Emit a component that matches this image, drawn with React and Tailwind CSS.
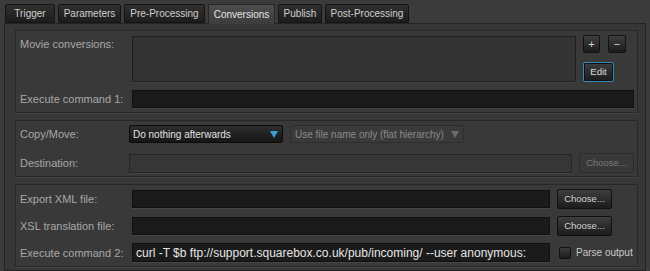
const tabs = [
  { label: 'Trigger', w: 'w-[50px]' },
  { label: 'Parameters', w: 'w-[63px]' },
  { label: 'Pre-Processing', w: 'w-[81px]' },
  { label: 'Conversions', w: 'w-[67px]', active: true },
  { label: 'Publish', w: 'w-[44px]' },
  { label: 'Post-Processing', w: 'w-[84px]' }
];

function Label({ children, w = 'w-[112px]', top }) {
  return (
    <div className={`${w} shrink-0 text-[11px] text-[#a8a8a8] leading-[14px] ${top ? 'pt-[1px] self-start' : ''}`}>
      {children}
    </div>
  );
}

function Field({ children, h = 'h-[18px]' }) {
  return (
    <div className={`flex-1 ${h} bg-[#1b1b1b] border border-[#101010] shadow-[0_1px_0_#474747] flex items-center px-[3px] text-[12px] text-[#e6e6e6] whitespace-nowrap overflow-hidden`}>
      {children}
    </div>
  );
}

function Button({ children, w, h = 'h-[20px]', disabled, focus }) {
  return (
    <div
      className={`${w} ${h} shrink-0 flex items-center justify-center rounded-[2px] text-[9.5px] ${
        disabled
          ? 'bg-[#393939] border border-[#2c2c2c] text-[#7a7a7a]'
          : focus
            ? 'bg-linear-to-b from-[#3e3e3e] to-[#1c1c1c] border border-[#3389b9] shadow-[inset_0_0_0_1px_#111] text-[#dcdcdc]'
            : 'bg-linear-to-b from-[#3e3e3e] to-[#1c1c1c] border border-[#111] text-[#d2d2d2]'
      }`}
    >
      {children}
    </div>
  );
}

function Triangle({ color }) {
  return (
    <svg width="8" height="7" viewBox="0 0 8 7">
      <polygon points="0,0 8,0 4,7" fill={color} />
    </svg>
  );
}

export default function App() {
  return (
    <div className="w-[650px] h-[271px] bg-[#3b3b3b] pt-[4px] px-[4px] overflow-hidden font-['Liberation_Sans',Arial,sans-serif]">
      <div className="relative z-10 flex items-start gap-[3px] pl-[1px] h-[19px]">
        {tabs.map((t) => (
          <div
            key={t.label}
            className={`${t.w} flex items-center justify-center text-[10px] rounded-t-[2px] ${
              t.active
                ? 'h-[20px] bg-linear-to-b from-[#4d4d4d] to-[#3c3c3c] border border-b-0 border-[#262626] text-[#e4e4e4]'
                : 'h-[19px] bg-linear-to-b from-[#303030] to-[#1d1d1d] border border-[#141414] text-[#cfcfcf]'
            }`}
          >
            {t.label}
          </div>
        ))}
      </div>

      <div className="h-[248px] border border-[#242424] bg-[#373737] pl-[10px] pr-[7px] pt-[6px] flex flex-col gap-[7px]">
        {/* movie conversions */}
        <div className="h-[83px] border border-[#272727] bg-[#393939] shadow-[0_1px_0_#444] pl-[4px] pr-[3px] pt-[5px] flex flex-col gap-[8px]">
          <div className="flex h-[46px] gap-[7px]">
            <Label top w="w-[105px]">Movie conversions:</Label>
            <div className="flex-1 h-[46px] bg-[#333] border border-[#1f1f1f] shadow-[0_1px_0_#444]" />
            <div className="w-[51px] shrink-0 flex flex-col gap-[9px] -mt-[1px]">
              <div className="flex gap-[8px]">
                <Button w="w-[17px]" h="h-[18px]">
                  <span className="text-[11px] leading-none">+</span>
                </Button>
                <Button w="w-[18px]" h="h-[18px]">
                  <span className="text-[11px] leading-none">−</span>
                </Button>
              </div>
              <Button w="w-[31px]" focus>Edit</Button>
            </div>
          </div>
          <div className="flex items-center">
            <Label>Execute command 1:</Label>
            <Field />
          </div>
        </div>

        {/* copy / move */}
        <div className="h-[57px] border border-[#272727] bg-[#393939] shadow-[0_1px_0_#444] pl-[4px] pr-[3px] pt-[4px] flex flex-col gap-[10px]">
          <div className="flex items-center h-[18px]">
            <Label w="w-[109px]">Copy/Move:</Label>
            <div className="w-[154px] h-[18px] rounded-[2px] bg-linear-to-b from-[#2e2e2e] to-[#151515] border border-[#0b0b0b] flex items-center justify-between pl-[3px] pr-[4px] text-[10px] text-[#e2e2e2]">
              Do nothing afterwards
              <Triangle color="#3c9ed6" />
            </div>
            <div className="ml-[7px] w-[174px] h-[18px] rounded-[2px] bg-[#3a3a3a] border border-[#2d2d2d] flex items-center justify-between pl-[4px] pr-[4px] text-[10px] text-[#8a8a8a]">
              Use file name only (flat hierarchy)
              <Triangle color="#6b6b6b" />
            </div>
          </div>
          <div className="flex items-center gap-[7px]">
            <Label w="w-[102px]">Destination:</Label>
            <div className="flex-1 h-[19px] bg-[#363636] border border-[#262626] shadow-[0_1px_0_#444]" />
            <Button w="w-[55px]" disabled>Choose...</Button>
          </div>
        </div>

        {/* xml export */}
        <div className="h-[83px] border border-[#272727] bg-[#393939] shadow-[0_1px_0_#444] pl-[4px] pr-[3px] pt-[5px] flex flex-col">
          <div className="flex items-center gap-[7px] h-[18px]">
            <Label w="w-[105px]">Export XML file:</Label>
            <Field />
            <div className="w-[77px] shrink-0">
              <Button w="w-[55px]">Choose...</Button>
            </div>
          </div>
          <div className="flex items-center gap-[7px] h-[18px] mt-[9px]">
            <Label w="w-[105px]">XSL translation file:</Label>
            <Field />
            <div className="w-[77px] shrink-0">
              <Button w="w-[55px]">Choose...</Button>
            </div>
          </div>
          <div className="flex items-center gap-[7px] h-[19px] mt-[8px]">
            <Label w="w-[105px]">Execute command 2:</Label>
            <Field h="h-[19px]">curl -T $b ftp://support.squarebox.co.uk/pub/incoming/ --user anonymous:</Field>
            <div className="w-[77px] shrink-0 flex items-center gap-[5px] pl-[2px]">
              <div className="w-[12px] h-[12px] rounded-[2px] bg-linear-to-b from-[#3c3c3c] to-[#1c1c1c] border border-[#111]" />
              <span className="text-[10px] text-[#c8c8c8] whitespace-nowrap">Parse output</span>
            </div>
          </div>
        </div>
      </div>
    </div>
  );
}
